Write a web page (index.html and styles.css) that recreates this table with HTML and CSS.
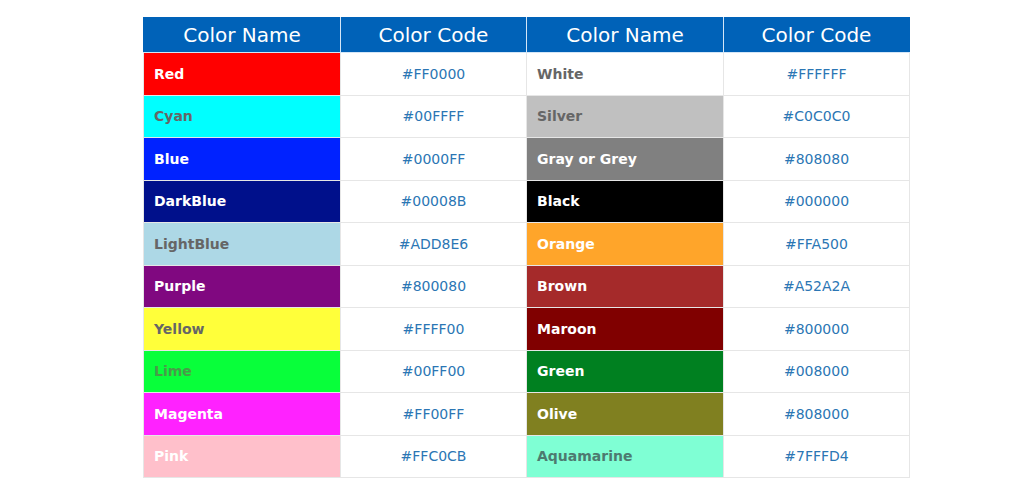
FILE: index.html
```html
<!DOCTYPE html>
<html>
<head>
<meta charset="utf-8">
<link rel="stylesheet" href="styles.css">
</head>
<body>
<div class="page">
<table class="colors">
<colgroup><col class="c-name"><col class="c-code"><col class="c-name"><col class="c-code"></colgroup>
<thead>
<tr><th>Color Name</th><th>Color Code</th><th>Color Name</th><th>Color Code</th></tr>
</thead>
<tbody>
<tr><td class="nm sw-red">Red</td><td class="cd">#FF0000</td><td class="nm sw-white">White</td><td class="cd">#FFFFFF</td></tr>
<tr><td class="nm sw-cyan">Cyan</td><td class="cd">#00FFFF</td><td class="nm sw-silver">Silver</td><td class="cd">#C0C0C0</td></tr>
<tr><td class="nm sw-blue">Blue</td><td class="cd">#0000FF</td><td class="nm sw-gray">Gray or Grey</td><td class="cd">#808080</td></tr>
<tr><td class="nm sw-darkblue">DarkBlue</td><td class="cd">#00008B</td><td class="nm sw-black">Black</td><td class="cd">#000000</td></tr>
<tr><td class="nm sw-lightblue">LightBlue</td><td class="cd">#ADD8E6</td><td class="nm sw-orange">Orange</td><td class="cd">#FFA500</td></tr>
<tr><td class="nm sw-purple">Purple</td><td class="cd">#800080</td><td class="nm sw-brown">Brown</td><td class="cd">#A52A2A</td></tr>
<tr><td class="nm sw-yellow">Yellow</td><td class="cd">#FFFF00</td><td class="nm sw-maroon">Maroon</td><td class="cd">#800000</td></tr>
<tr><td class="nm sw-lime">Lime</td><td class="cd">#00FF00</td><td class="nm sw-green">Green</td><td class="cd">#008000</td></tr>
<tr><td class="nm sw-magenta">Magenta</td><td class="cd">#FF00FF</td><td class="nm sw-olive">Olive</td><td class="cd">#808000</td></tr>
<tr><td class="nm sw-pink">Pink</td><td class="cd">#FFC0CB</td><td class="nm sw-aqua">Aquamarine</td><td class="cd">#7FFFD4</td></tr>
</tbody>
</table>
</div>
</body>
</html>
```
FILE: styles.css
```css
html, body {
  margin: 0;
  padding: 0;
  background: #ffffff;
}
.page {
  padding: 17px 0 0 143px;
}
.colors {
  border-collapse: collapse;
  table-layout: fixed;
  width: 766px;
  font-family: "DejaVu Sans", Verdana, sans-serif;
}
.c-name { width: 197px; }
.c-code { width: 186px; }
.colors th {
  height: 35px;
  padding: 0;
  background: #0062b8;
  color: #ffffff;
  font-weight: normal;
  font-size: 20px;
  text-align: center;
  border: 1px solid #d4e6f7;
  border-top-color: #0062b8;
  box-sizing: border-box;
}
.colors th:first-child { border-left-color: #0062b8; }
.colors th:last-child { border-right-color: #0062b8; }
.colors td {
  height: 42.5px;
  padding: 0;
  border: 1px solid #e6e6e6;
  box-sizing: border-box;
}
.colors .nm {
  padding-left: 10px;
  font-weight: bold;
  font-size: 14px;
}
.colors .cd {
  text-align: center;
  font-size: 14px;
  color: #2b76b4;
}

.sw-red { background: #ff0000; color: #ffffff; }
.sw-cyan { background: #00ffff; color: #666666; }
.sw-blue { background: #0022ff; color: #ffffff; }
.sw-darkblue { background: #00108b; color: #ffffff; }
.sw-lightblue { background: #add8e6; color: #666666; }
.sw-purple { background: #800880; color: #ffffff; }
.sw-yellow { background: #ffff3a; color: #666666; }
.sw-lime { background: #08ff3a; color: #4a9a4a; }
.sw-magenta { background: #ff22ff; color: #ffffff; }
.sw-pink { background: #ffc0cb; color: #ffffff; }
.sw-white { background: #ffffff; color: #666666; }
.sw-silver { background: #c0c0c0; color: #666666; }
.sw-gray { background: #808080; color: #ffffff; }
.sw-black { background: #000000; color: #ffffff; }
.sw-orange { background: #ffa52a; color: #ffffff; }
.sw-brown { background: #a52a2a; color: #ffffff; }
.sw-maroon { background: #800000; color: #ffffff; }
.sw-green { background: #008020; color: #ffffff; }
.sw-olive { background: #808020; color: #ffffff; }
.sw-aqua { background: #7fffd4; color: #4d7a70; }
```
